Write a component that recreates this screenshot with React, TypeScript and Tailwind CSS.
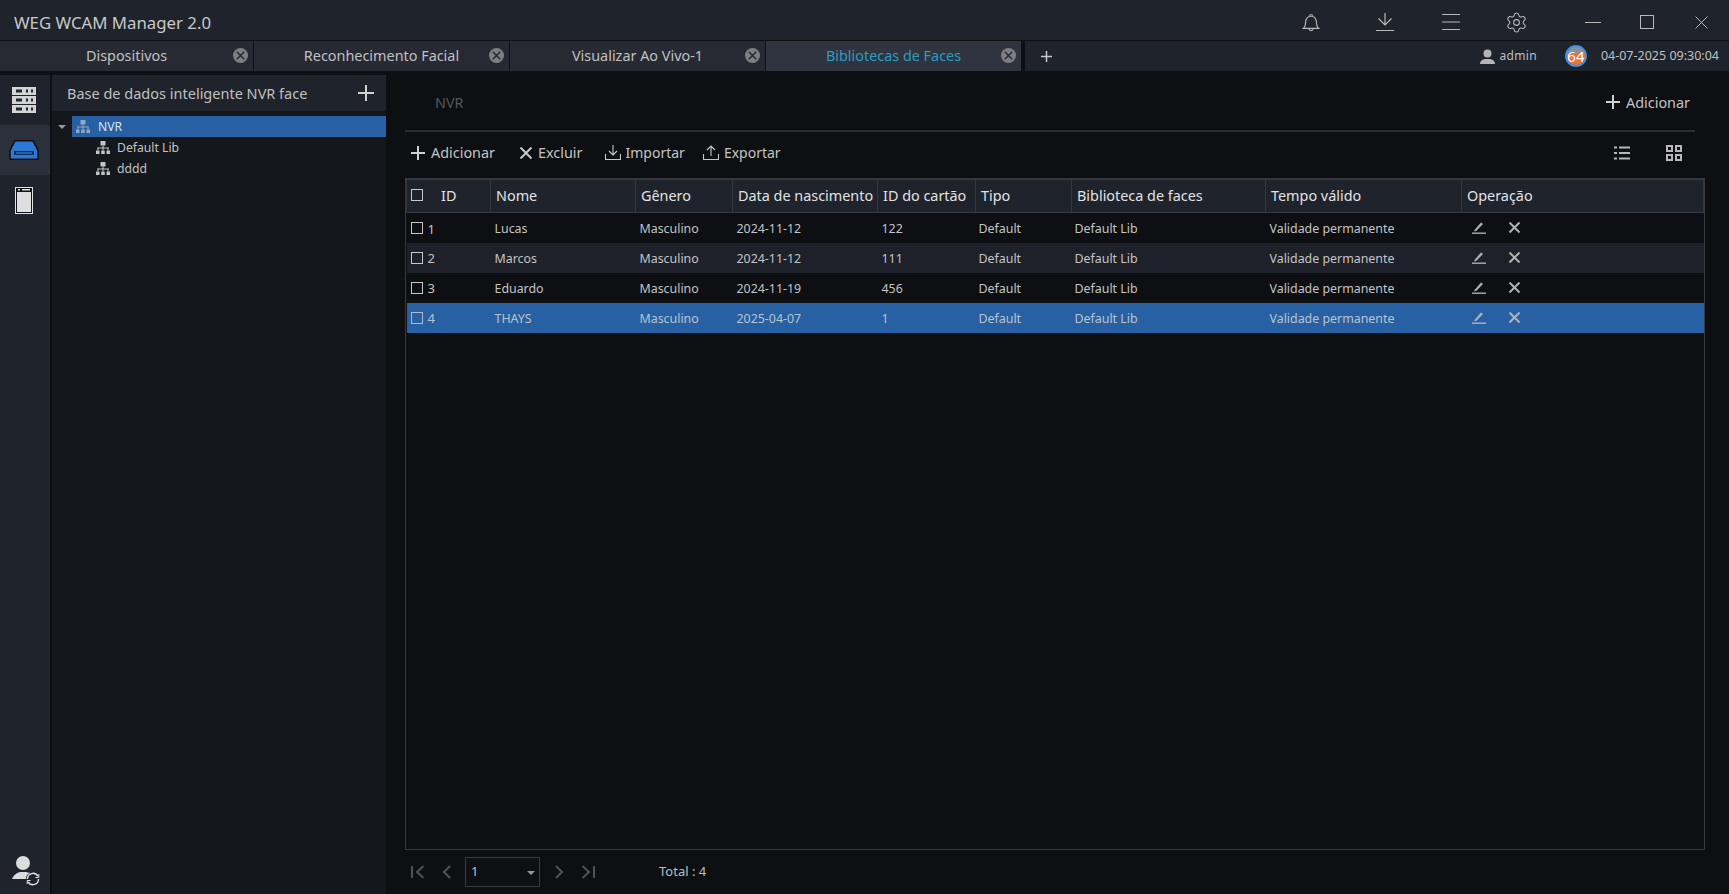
import { Settings } from "lucide-react";

const tabs = [
  { label: "Dispositivos", width: "w-[254px]" },
  { label: "Reconhecimento Facial", width: "w-[256px]" },
  { label: "Visualizar Ao Vivo-1", width: "w-[256px]" },
  { label: "Bibliotecas de Faces", width: "w-[256px]", active: true },
];

const columns = [
  { label: "ID", width: "w-[84px]" },
  { label: "Nome", width: "w-[145px]" },
  { label: "Gênero", width: "w-[97px]" },
  { label: "Data de nascimento", width: "w-[145px]" },
  { label: "ID do cartão", width: "w-[98px]" },
  { label: "Tipo", width: "w-[96px]" },
  { label: "Biblioteca de faces", width: "w-[194px]" },
  { label: "Tempo válido", width: "w-[196px]" },
  { label: "Operação", width: "" },
];

const rows = [
  { id: 1, name: "Lucas", date: "2024-11-12", card: "122" },
  { id: 2, name: "Marcos", date: "2024-11-12", card: "111" },
  { id: 3, name: "Eduardo", date: "2024-11-19", card: "456" },
  { id: 4, name: "THAYS", date: "2025-04-07", card: "1" },
];

function TabClose() {
  return (
    <svg width="15" height="15" viewBox="0 0 15 15" className="absolute right-[5px] top-[7px]">
      <circle cx="7.5" cy="7.5" r="7.5" fill="#7d7f84" />
      <path d="M3.8 3.8 11.2 11.2M11.2 3.8 3.8 11.2" stroke="#24272f" strokeWidth="1.4" />
    </svg>
  );
}

function PlusIcon({ size, color = "#d0d0d0", weight = 2 }: { size: number; color?: string; weight?: number }) {
  return (
    <svg width={size} height={size} viewBox={`0 0 ${size} ${size}`} stroke={color} strokeWidth={weight} className="shrink-0">
      <path d={`M${size / 2} 0V${size}M0 ${size / 2}H${size}`} />
    </svg>
  );
}

function CrossIcon({ size, color = "#c8c8c8", weight = 2 }: { size: number; color?: string; weight?: number }) {
  return (
    <svg width={size} height={size} viewBox={`0 0 ${size} ${size}`} stroke={color} strokeWidth={weight} className="shrink-0">
      <path d={`M0.5 0.5 ${size - 0.5} ${size - 0.5}M${size - 0.5} 0.5 0.5 ${size - 0.5}`} />
    </svg>
  );
}

function TreeIcon({ color }: { color: string }) {
  return (
    <svg width="14" height="13" viewBox="0 0 14 13" fill={color}>
      <rect x="4.5" y="0" width="5" height="4.5" />
      <rect x="6.5" y="4.5" width="1" height="2.5" />
      <rect x="1.5" y="6.5" width="11" height="1" />
      <rect x="1.5" y="6.5" width="1" height="3" />
      <rect x="11.5" y="6.5" width="1" height="3" />
      <rect x="6.5" y="6.5" width="1" height="3" />
      <rect x="0" y="9.5" width="3.5" height="3.5" />
      <rect x="5.25" y="9.5" width="3.5" height="3.5" />
      <rect x="10.5" y="9.5" width="3.5" height="3.5" />
    </svg>
  );
}

function Checkbox({ selected = false }: { selected?: boolean }) {
  return (
    <span className={`inline-block h-[12px] w-[12px] border ${selected ? "border-[#b4bcc8]" : "border-[#c8c8c8]"}`} />
  );
}

function EditIcon({ color }: { color: string }) {
  return (
    <svg width="14" height="13" viewBox="0 0 14 13" fill="none">
      <path d="M2.5 9 9 1.5 11 3 4.500 9.800 2 10.500Z" fill={color} />
      <rect x="0" y="11.500" width="14" height="1.400" fill={color} />
    </svg>
  );
}

function TableRow({ row, index }: { row: (typeof rows)[number]; index: number }) {
  const selected = row.id === 4;
  const bg = selected
    ? "bg-[#2861a3] text-[#b9c3d0]"
    : index % 2 === 1
      ? "bg-[#1e212a] text-[#c4c4c4]"
      : "bg-[#0d0f13] text-[#c4c4c4]";
  const icon = selected ? "#a9b4c4" : "#b0b0b0";
  return (
    <tr className={`h-[30px] text-[12.4px] ${bg}`}>
      <td className="pl-[4px]">
        <div className="flex items-center gap-[5px] text-[13px]">
          <Checkbox selected={selected} />
          <span className="pt-[3px]">{row.id}</span>
        </div>
      </td>
      <td className="pl-[4px] pt-[4px]">{row.name}</td>
      <td className="pl-[4px] pt-[4px]">Masculino</td>
      <td className="pl-[4px] pt-[4px]">{row.date}</td>
      <td className="pl-[4px] pt-[4px]">{row.card}</td>
      <td className="pl-[3px] pt-[4px]">Default</td>
      <td className="pl-[3px] pt-[4px]">Default Lib</td>
      <td className="pl-[4px] pt-[4px]">Validade permanente</td>
      <td className="pl-[10px]">
        <div className="flex items-center gap-[23px]">
          <EditIcon color={icon} />
          <CrossIcon size={11} color={icon} />
        </div>
      </td>
    </tr>
  );
}

export default function App() {
  return (
    <div className="flex h-[894px] w-[1729px] flex-col overflow-hidden bg-[#0d0f13] font-['Noto_Sans','Open_Sans',sans-serif] text-[#c9c9c9]">
      {/* Title bar */}
      <div className="flex h-[41px] shrink-0 items-center justify-between border-b border-[#0d0f13] bg-[#1f232c] pl-[14px] pr-[21px] pt-[4px]">
        <span className="pt-[1px] text-[16.8px] text-[#c8c8c8]">WEG WCAM Manager 2.0</span>
        <div className="flex items-center text-[#b9b9b9]">
          <svg width="18" height="19" viewBox="0 0 20 20" fill="none" stroke="currentColor" strokeWidth="1.2" className="mr-[56px]">
            <path d="M1.500 16.500c2-1.500 2.300-3 2.500-6.500C4.200 5.500 6.500 3 10 3s5.800 2.500 6 7c.2 3.500.5 5 2.500 6.500Z" />
            <path d="M8 2.500C8.300 1 11.700 1 12 2.500M7.500 16.800c.5 3 4.500 3 5 0" />
          </svg>
          <svg width="18" height="18" viewBox="0 0 18 18" fill="none" stroke="currentColor" strokeWidth="1.2" className="mr-[48px]">
            <path d="M9 0v12M2.500 5.500 9 12l6.500-6.500M0 17.500h18" />
          </svg>
          <svg width="18" height="16" viewBox="0 0 18 16" fill="none" stroke="currentColor" strokeWidth="1" className="mr-[45px]">
            <path d="M0 .5h18M0 8h18M0 15.500h18" />
          </svg>
          <Settings size={23} strokeWidth={1.150} className="mr-[57px]" />
          <span className="mr-[39px] h-[1px] w-[16px] bg-current" />
          <span className="mr-[41px] h-[14px] w-[14px] border border-current" />
          <svg width="13" height="13" viewBox="0 0 13 13" stroke="currentColor" strokeWidth="1">
            <path d="M.5.5l12 12M12.500.5l-12 12" />
          </svg>
        </div>
      </div>

      {/* Tabs */}
      <div className="flex h-[30px] shrink-0 items-stretch bg-[#1f232c]">
        {tabs.map((tab) => (
          <div
            key={tab.label}
            className={`relative flex shrink-0 items-center justify-center border-r border-[#0d0f13] pb-[1px] text-[14.4px] ${tab.width} ${
              tab.active ? "bg-[#30343e] text-[#2a9cc4]" : "bg-[#272a33] text-[#c0c0c0]"
            }`}
          >
            {tab.label}
            <TabClose />
          </div>
        ))}
        <div className="w-[3px] bg-[#0d0f13]" />
        <div className="flex w-[43px] items-center justify-center">
          <PlusIcon size={11} color="#c8c8c8" weight={1.500} />
        </div>
        <div className="ml-auto flex items-center pr-[10px] text-[12px]">
          <svg width="15" height="15" viewBox="0 0 15 15" fill="#b5b5b5" className="mr-[5px]">
            <circle cx="7.500" cy="4.500" r="4" />
            <path d="M0 15c0-3 2.500-4.500 5-5h5c2.500.5 5 2 5 5Z" />
          </svg>
          <span className="mr-[28px] tracking-[0.3px] text-[#b8c0c8]">admin</span>
          <span className="relative mr-[14px] flex h-[22px] w-[22px] items-center justify-center overflow-hidden rounded-full border-2 border-[#3f8fe0] bg-[#f0703c] text-[15px] text-white">
            <span className="absolute inset-x-0 top-0 h-[7px] bg-[#8a8f9a]" />
            <span className="relative">64</span>
          </span>
          <span className="text-[12.5px] text-[#c0c0c0]">04-07-2025 09:30:04</span>
        </div>
      </div>

      {/* Body */}
      <div className="flex min-h-0 flex-1 pt-[4px]">
        {/* Icon rail */}
        <div className="flex w-[50px] shrink-0 flex-col bg-[#1f232c]">
          <div className="flex h-[50px] items-center justify-center pr-[2px]">
            <svg width="24" height="27" viewBox="0 0 24 27">
              {[0, 9, 18].map((y) => (
                <g key={y}>
                  <rect x="0" y={y} width="24" height="8" fill="#d4d4d4" />
                  <rect x="4" y={y + 2.5} width="6" height="3" fill="#22252d" />
                  <rect x="14" y={y + 2.5} width="2" height="3" fill="#22252d" />
                  <rect x="19" y={y + 2.5} width="2" height="3" fill="#22252d" />
                </g>
              ))}
            </svg>
          </div>
          <div className="flex h-[50px] items-center justify-center bg-[#2c303a] pr-[2px]">
            <svg width="30" height="20" viewBox="0 0 30 20">
              <path d="M6 .8h18l5 9.500v9H1v-9Z" fill="#2a7ad6" stroke="#0d0f13" strokeWidth="1.500" strokeLinejoin="round" />
              <rect x="5" y="11" width="20" height="4" fill="#0f2a4c" />
              <rect x="7" y="12.300" width="16" height="1.400" fill="#2a7ad6" />
            </svg>
          </div>
          <div className="flex h-[50px] items-center justify-center pr-[2px]">
            <svg width="18" height="27" viewBox="0 0 18 27">
              <rect x="0.5" y="0.5" width="17" height="26" fill="#111318" stroke="#e0e0e0" />
              <rect x="2" y="5" width="14" height="20" fill="#dedede" />
              <rect x="3" y="2" width="2" height="1.500" fill="#e0e0e0" />
              <rect x="7" y="2" width="8" height="1.500" fill="#e0e0e0" />
            </svg>
          </div>
          <div className="mt-auto flex items-end pb-[8px] pl-[12px]">
            <svg width="28" height="30" viewBox="0 0 28 30" fill="#dcdcdc">
              <circle cx="11" cy="7" r="7" />
              <path d="M0 23c1-3 4-6 8-7h6c1 0 3 1 4 1-3 1-4 3-4 6Z" />
              <path
                d="M15.500 23A5.500 5.500 0 0 1 25.800 20.200M26.500 23A5.500 5.500 0 0 1 16.200 25.800"
                fill="none"
                stroke="#e4e4e4"
                strokeWidth="1.400"
              />
              <path d="M26.800 18v3.500h-3.300M15.200 28v-3.500h3.300" fill="none" stroke="#e4e4e4" strokeWidth="1" />
            </svg>
          </div>
        </div>

        {/* Library tree */}
        <div className="ml-[2px] flex w-[334px] shrink-0 flex-col bg-[#14171c]">
          <div className="flex h-[36px] shrink-0 items-center justify-between bg-[#1f232c] pl-[15px] pr-[12px] text-[14.5px] text-[#c0c0c0]">
            <span className="pt-[2px]">Base de dados inteligente NVR face</span>
            <PlusIcon size={16} />
          </div>
          <div className="pt-[5px] text-[12.2px]">
            <div className="flex h-[21px] items-center">
              <span className="ml-[6px] mr-[6px] h-0 w-0 border-x-[4px] border-t-[4px] border-x-transparent border-t-[#9a9a9a]" />
              <div className="flex h-full flex-1 items-center bg-[#2861a3] pl-[4px] text-[#d5e2f0]">
                <TreeIcon color="#8ea8c6" />
                <span className="ml-[8px] pt-[2px]">NVR</span>
              </div>
            </div>
            <div className="flex h-[21px] items-center pl-[44px] text-[#c4c4c4]">
              <TreeIcon color="#c4c4c4" />
              <span className="ml-[7px] pt-[2px]">Default Lib</span>
            </div>
            <div className="flex h-[21px] items-center pl-[44px] text-[#c4c4c4]">
              <TreeIcon color="#c4c4c4" />
              <span className="ml-[7px] pt-[2px]">dddd</span>
            </div>
          </div>
        </div>

        {/* Main panel */}
        <div className="flex min-w-0 flex-1 flex-col pl-[19px] pr-[24px]">
          <div className="mr-[10px] flex h-[57px] shrink-0 items-center justify-between border-b-2 border-[#2a2c33] pl-[30px] pr-[5px] text-[14.4px]">
            <span className="text-[#53565c]">NVR</span>
            <div className="flex items-center gap-[6px] text-[#c0c4c8]">
              <PlusIcon size={14} />
              <span>Adicionar</span>
            </div>
          </div>
          <div className="flex h-[46px] shrink-0 items-center justify-between pb-[4px] pl-[6px] pr-[23px] text-[14.4px] text-[#c4c4c4]">
            <div className="flex items-center">
              <PlusIcon size={14} />
              <span className="ml-[6px] mr-[25px]">Adicionar</span>
              <CrossIcon size={12} />
              <span className="ml-[6px] mr-[22px]">Excluir</span>
              <svg width="16" height="15" viewBox="0 0 16 15" fill="none" stroke="#c8c8c8" strokeWidth="1.100">
                <path d="M8 0v10M4 6l4 4 4-4M.5 9v5.500h15V9" />
              </svg>
              <span className="ml-[5px] mr-[18px] text-[14px]">Importar</span>
              <svg width="16" height="15" viewBox="0 0 16 15" fill="none" stroke="#c8c8c8" strokeWidth="1.100">
                <path d="M8 11V1M4 5l4-4 4 4M.5 9v5.500h15V9" />
              </svg>
              <span className="ml-[5px] text-[14px]">Exportar</span>
            </div>
            <div className="flex items-center gap-[36px]">
              <svg width="16" height="14" viewBox="0 0 16 14" fill="#b8b8b8">
                <rect x="0" y="0.500" width="3" height="2" />
                <rect x="5" y="0.500" width="11" height="2" />
                <rect x="0" y="6" width="3" height="2" />
                <rect x="5" y="6" width="11" height="2" />
                <rect x="0" y="11.500" width="3" height="2" />
                <rect x="5" y="11.500" width="11" height="2" />
              </svg>
              <svg width="16" height="16" viewBox="0 0 16 16" fill="none" stroke="#b8b8b8" strokeWidth="2">
                <rect x="1" y="1" width="5" height="5" />
                <rect x="10" y="1" width="5" height="5" />
                <rect x="1" y="10" width="5" height="5" />
                <rect x="10" y="10" width="5" height="5" />
              </svg>
            </div>
          </div>

          {/* Table */}
          <div className="h-[672px] shrink-0 border border-[#35383f]">
            <table className="w-full table-fixed border-collapse">
              <colgroup>
                {columns.map((column) => (
                  <col key={column.label} className={column.width} />
                ))}
              </colgroup>
              <thead>
                <tr className="h-[33px] bg-[#1f232c] text-left text-[14.4px] text-[#e2e2e2]">
                  {columns.map((column, i) => (
                    <th
                      key={column.label}
                      className={`border border-[#35383f] pb-[1px] font-normal ${i === 0 ? "pl-[4px]" : "pl-[5px]"}`}
                    >
                      {i === 0 ? (
                        <div className="flex items-center gap-[18px]">
                          <Checkbox />
                          <span>{column.label}</span>
                        </div>
                      ) : (
                        column.label
                      )}
                    </th>
                  ))}
                </tr>
              </thead>
              <tbody>
                {rows.map((row, index) => (
                  <TableRow key={row.id} row={row} index={index} />
                ))}
              </tbody>
            </table>
          </div>

          {/* Pagination */}
          <div className="flex flex-1 items-center pl-[6px] text-[#4f5156]">
            <svg width="14" height="14" viewBox="0 0 14 14" fill="none" stroke="currentColor" strokeWidth="2">
              <path d="M1 1v12M12.500 1 6 7l6.500 6" />
            </svg>
            <svg width="9" height="14" viewBox="0 0 9 14" fill="none" stroke="currentColor" strokeWidth="2" className="ml-[17px]">
              <path d="M8 1 2 7l6 6" />
            </svg>
            <div className="relative ml-[14px] flex h-[30px] w-[75px] items-center border border-[#3a3c42] pl-[5px] text-[13px] text-[#b4c4d4]">
              1
              <span className="absolute right-[4px] top-[13px] h-0 w-0 border-x-[4px] border-t-[4px] border-x-transparent border-t-[#9a9a9a]" />
            </div>
            <svg width="9" height="14" viewBox="0 0 9 14" fill="none" stroke="currentColor" strokeWidth="2" className="ml-[15px]">
              <path d="M1 1l6 6-6 6" />
            </svg>
            <svg width="14" height="14" viewBox="0 0 14 14" fill="none" stroke="currentColor" strokeWidth="2" className="ml-[17px]">
              <path d="M13 1v12M1.500 1 8 7l-6.500 6" />
            </svg>
            <span className="ml-[64px] text-[13px] text-[#b4c0c4]">Total : 4</span>
          </div>
        </div>
      </div>
    </div>
  );
}
